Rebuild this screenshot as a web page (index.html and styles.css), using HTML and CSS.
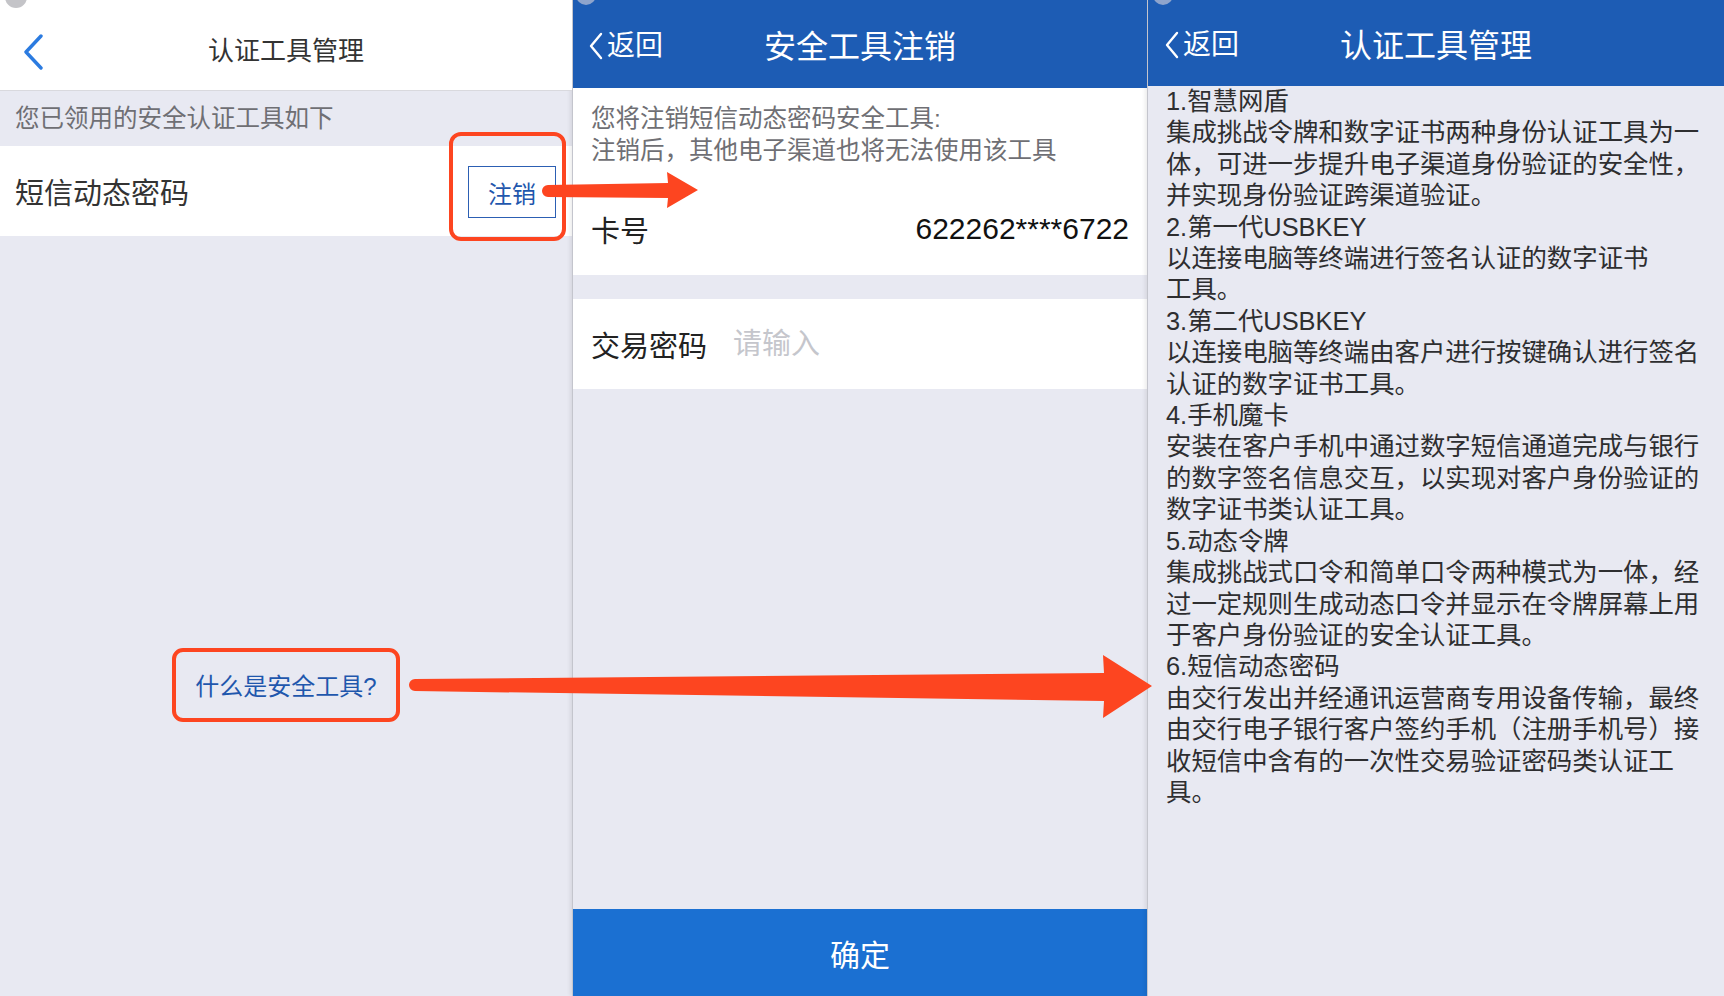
FILE: index.html
```html
<!DOCTYPE html>
<html lang="zh-CN">
<head>
  <meta charset="UTF-8" />
  <meta name="viewport" content="width=device-width, initial-scale=1.0"/>
  <title>认证工具管理</title>
<link rel="stylesheet" href="styles.css">
</head>
<body>
  <div class="screen">

    <!-- panel 1: tool list -->
    <section class="panel panel-tools">
      <header class="nav nav-light">
        <svg class="nav-chevron" width="24" height="36" viewBox="0 0 24 36">
          <path d="M19 2 L4 18 L19 34" fill="none" stroke="#2b7be0" stroke-width="3.4" stroke-linecap="round" stroke-linejoin="round"/>
        </svg>
        <h1 class="nav-title">认证工具管理</h1>
      </header>
      <div class="tip">您已领用的安全认证工具如下</div>
      <div class="tool-row">
        <span class="tool-name">短信动态密码</span>
        <button class="btn-cancel">注销</button>
      </div>
      <a class="what-link">什么是安全工具?</a>
    </section>

    <!-- panel 2: cancel tool -->
    <section class="panel panel-cancel">
      <header class="nav nav-blue">
        <span class="back">
          <svg width="14" height="28" viewBox="0 0 14 28">
            <path d="M12 2 L2 14 L12 26" fill="none" stroke="#fff" stroke-width="2.4" stroke-linecap="round" stroke-linejoin="round"/>
          </svg>返回
        </span>
        <h1 class="nav-title">安全工具注销</h1>
      </header>
      <div class="card">
        <p class="notice">您将注销短信动态密码安全工具:<br>注销后，其他电子渠道也将无法使用该工具</p>
        <div class="field field-card">
          <span class="field-label">卡号</span>
          <span class="field-value">622262****6722</span>
        </div>
      </div>
      <div class="card card-pwd">
        <div class="field">
          <span class="field-label">交易密码</span>
          <input class="field-input" type="password" placeholder="请输入">
        </div>
      </div>
      <button class="btn-confirm">确定</button>
    </section>

    <!-- panel 3: what are the tools -->
    <section class="panel panel-info">
      <header class="nav nav-blue nav-short">
        <span class="back">
          <svg width="14" height="28" viewBox="0 0 14 28">
            <path d="M12 2 L2 14 L12 26" fill="none" stroke="#fff" stroke-width="2.4" stroke-linecap="round" stroke-linejoin="round"/>
          </svg>返回
        </span>
        <h1 class="nav-title">认证工具管理</h1>
      </header>
      <div class="info-text">
        <p>1.智慧网盾<br>集成挑战令牌和数字证书两种身份认证工具为一<br>体，可进一步提升电子渠道身份验证的安全性，<br>并实现身份验证跨渠道验证。</p>
        <p>2.第一代USBKEY<br>以连接电脑等终端进行签名认证的数字证书<br>工具。</p>
        <p>3.第二代USBKEY<br>以连接电脑等终端由客户进行按键确认进行签名<br>认证的数字证书工具。</p>
        <p>4.手机魔卡<br>安装在客户手机中通过数字短信通道完成与银行<br>的数字签名信息交互，以实现对客户身份验证的<br>数字证书类认证工具。</p>
        <p>5.动态令牌<br>集成挑战式口令和简单口令两种模式为一体，经<br>过一定规则生成动态口令并显示在令牌屏幕上用<br>于客户身份验证的安全认证工具。</p>
        <p>6.短信动态密码<br>由交行发出并经通讯运营商专用设备传输，最终<br>由交行电子银行客户签约手机（注册手机号）接<br>收短信中含有的一次性交易验证密码类认证工<br>具。</p>
      </div>
    </section>

    <!-- red annotations drawn over the screenshots -->
    <svg class="marks" width="1724" height="996" viewBox="0 0 1724 996">
      <circle cx="16" cy="-3" r="11" fill="#c4c4c8"/>
      <circle cx="586" cy="-5" r="10" fill="#8ea4cc"/>
      <circle cx="1163" cy="-5" r="10" fill="#8ea4cc"/>
      <rect x="451" y="134" width="113" height="105" rx="10" fill="none" stroke="#fd4520" stroke-width="4"/>
      <rect x="174" y="650" width="224" height="70" rx="9" fill="none" stroke="#fd4520" stroke-width="4"/>
      <path d="M548 185 L668 183 L667 172 L698 190 L667 208 L668 198 L548 197 A6 6 0 0 1 548 185 Z" fill="#fd4520"/>
      <path d="M415 679 L1104 673 L1103 655 L1152 686 L1103 718 L1104 701 L415 691 A6 6 0 0 1 415 679 Z" fill="#fd4520"/>
    </svg>
  </div>
</body>
</html>
```

FILE: styles.css
```css
:root {
  --nav-blue: #1d5cb4;
  --btn-blue: #1b70d2;
  --link-blue: #1f57ad;
  --page-bg: #e8e9f2;
  --white: #ffffff;
  --text: #333;
  --muted: #6f6f74;
  --hint: #c5c6cc;
}

* {
  box-sizing: border-box;
}

body {
  margin: 0;
  font-family: "Liberation Sans", "Noto Sans CJK SC", sans-serif;
  background-color: var(--page-bg);
  color: var(--text);
}

.screen {
  position: relative;
  display: flex;
  width: 1724px;
  height: 996px;
  overflow: hidden;
}

.panel {
  display: flex;
  flex-direction: column;
  height: 100%;
  background-color: var(--page-bg);
}

.panel-tools {
  width: 572px;
}

.panel-cancel {
  width: 575px;
  border-left: 1px solid #c4c5cd;
  box-shadow: -2px 0 4px rgba(0, 0, 0, 0.08);
}

.panel-info {
  width: 577px;
  border-left: 1px solid #c4c5cd;
  box-shadow: -2px 0 4px rgba(0, 0, 0, 0.08);
}

/* nav bars */

.nav {
  position: relative;
  display: flex;
  align-items: center;
  justify-content: center;
  flex-shrink: 0;
  height: 88px;
}

.nav-light {
  height: 91px;
  padding-top: 12px;
  background-color: var(--white);
  border-bottom: 1px solid #d9d9de;
}

.nav-blue {
  background-color: var(--nav-blue);
  color: var(--white);
  padding-top: 6px;
}

.nav-short {
  height: 86px;
}

.nav-chevron {
  position: absolute;
  left: 22px;
  top: 34px;
}

.nav-title {
  margin: 0;
  font-size: 26px;
  font-weight: normal;
  line-height: 1;
}

.nav-blue .nav-title {
  font-size: 32px;
}

.back {
  position: absolute;
  left: 16px;
  top: 28px;
  display: flex;
  align-items: center;
  gap: 4px;
  font-size: 28px;
  line-height: 36px;
}

.panel-info .back {
  left: 17px;
  top: 27px;
}

/* panel 1 */

.tip {
  height: 55px;
  padding-left: 15px;
  font-size: 24.5px;
  line-height: 55px;
  color: var(--muted);
}

.tool-row {
  display: flex;
  align-items: center;
  justify-content: space-between;
  height: 90px;
  padding: 0 16px 0 15px;
  background-color: var(--white);
}

.tool-name {
  font-size: 29px;
}

.btn-cancel {
  width: 88px;
  height: 52px;
  margin-top: 2px;
  background-color: var(--white);
  border: 1px solid #2c5fb3;
  color: var(--link-blue);
  font-family: inherit;
  font-size: 24px;
  cursor: pointer;
}

.what-link {
  margin-top: 433px;
  text-align: center;
  font-size: 24px;
  line-height: 36px;
  color: var(--link-blue);
  cursor: pointer;
}

/* panel 2 */

.card {
  background-color: var(--white);
  padding: 0 18px 0 18px;
}

.notice {
  margin: 0;
  padding-top: 15px;
  font-size: 24.5px;
  line-height: 32px;
  color: var(--muted);
}

.field {
  display: flex;
  align-items: center;
  height: 90px;
}

.field-card {
  height: 108px;
  padding-top: 16px;
}

.card-pwd {
  margin-top: 24px;
}

.field-label {
  font-size: 29px;
  color: #222;
}

.field-value {
  margin-left: auto;
  font-size: 30px;
  color: #111;
}

.field-input {
  flex: 1;
  margin-left: 24px;
  border: none;
  outline: none;
  background: transparent;
  font-family: inherit;
  font-size: 29px;
  color: #222;
}

.field-input::placeholder {
  color: var(--hint);
}

.btn-confirm {
  margin-top: auto;
  height: 87px;
  border: none;
  background-color: var(--btn-blue);
  color: var(--white);
  font-family: inherit;
  font-size: 30px;
  cursor: pointer;
}

/* panel 3 */

.info-text {
  padding-left: 18px;
  font-size: 25.4px;
  line-height: 31.4px;
  color: #2e2e30;
  white-space: nowrap;
}

.info-text p {
  margin: 0;
}

/* annotations */

.marks {
  position: absolute;
  top: 0;
  left: 0;
  pointer-events: none;
}
```
